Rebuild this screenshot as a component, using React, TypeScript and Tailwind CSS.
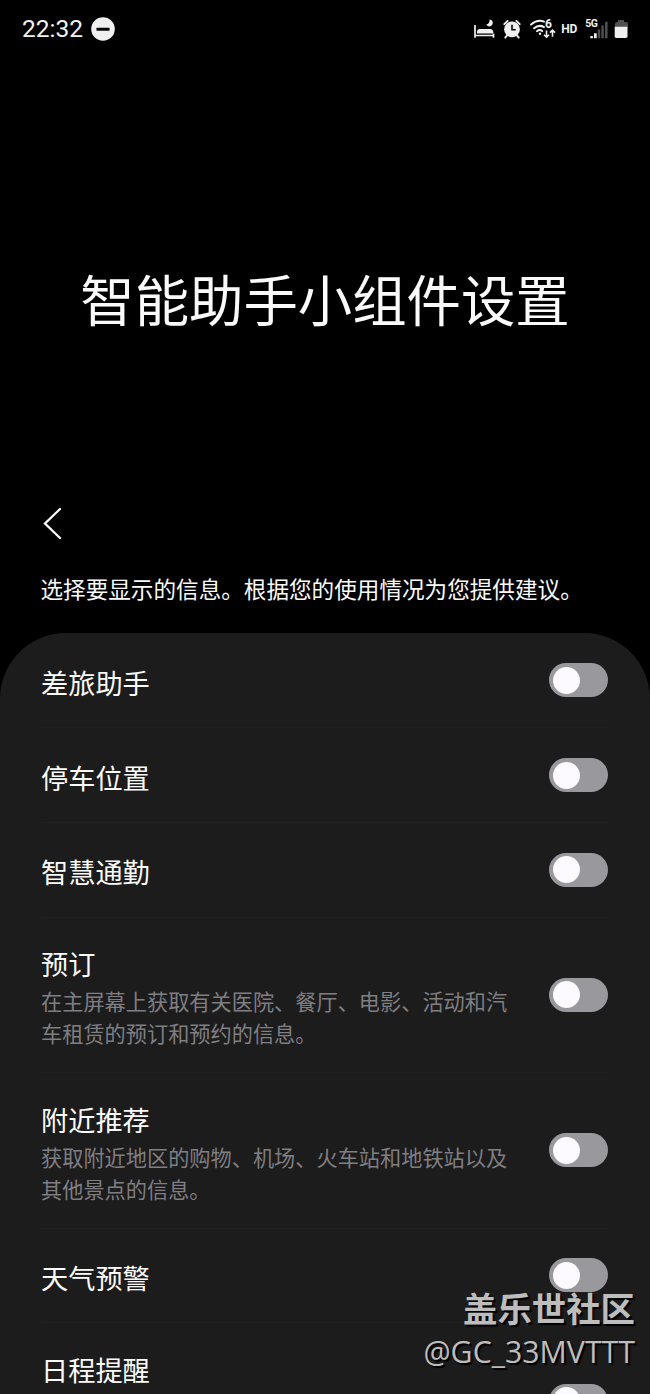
import React from "react";

const items = [
  { name: "差旅助手" },
  { name: "停车位置" },
  { name: "智慧通勤" },
  {
    name: "预订",
    lines: ["在主屏幕上获取有关医院、餐厅、电影、活动和汽", "车租赁的预订和预约的信息。"],
  },
  {
    name: "附近推荐",
    lines: ["获取附近地区的购物、机场、火车站和地铁站以及", "其他景点的信息。"],
  },
  { name: "天气预警" },
  { name: "日程提醒", lines: ["", ""] },
];

function StatusBar() {
  return (
    <div className="flex h-[58px] shrink-0 items-center justify-between pr-[21px] pl-[22px] text-[#f2f2f2]">
      <div className="flex items-center gap-[8px]">
        <span className="w-[61px] font-['Roboto'] text-[24.5px] leading-[30px] whitespace-nowrap">22:32</span>
        <svg width="24" height="24" viewBox="0 0 24 24">
          <circle cx="12" cy="12" r="11.8" fill="#f0f0f0" />
          <rect x="5.5" y="10.7" width="13" height="3" rx="0.5" fill="#050505" />
        </svg>
      </div>
      <svg width="156" height="24" viewBox="473 17 156 24" fill="none">
        {/* sleep mode */}
        <path d="M475 25v12.7M475 35.5h18.5M493.5 37.7v-4" stroke="#f0f0f0" strokeWidth="1.7" />
        <path d="M477 33.4v-1.6q.2-2.8 3-2.8h10q3.2 0 3.5 4.4z" fill="#f0f0f0" />
        <path d="M489.6 19.4a3.5 3.5 0 1 1-3.4 5.1q3.6-.7 3.4-5.1z" fill="#f0f0f0" />
        {/* alarm */}
        <circle cx="512" cy="29.3" r="7.9" fill="#f0f0f0" />
        <path d="M504.3 24.2l3.3-3.3M519.7 24.2l-3.3-3.3M507.3 35l-2 2.6M516.7 35l2 2.6" stroke="#f0f0f0" strokeWidth="1.9" strokeLinecap="round" />
        <path d="M512 24.8v5h3.7" stroke="#080808" strokeWidth="1.6" />
        {/* wifi */}
        <path d="M531 24.5q6.5-5.3 13-2.9M534 28.2q5-4 10-1.1M537 31.2q2.7-2.2 5.2-.1" stroke="#f0f0f0" strokeWidth="2" strokeLinecap="round" />
        <circle cx="540" cy="33.7" r="1.2" fill="#f0f0f0" />
        <text x="545" y="27.8" fill="#f0f0f0" fontFamily="Roboto" fontSize="12" fontWeight="700">6</text>
        <path d="M546.5 30.5v6.3M544 34.7l2.5 2.5 2.5-2.5M552.5 36.8v-6.3M550 32.6l2.5-2.5 2.5 2.5" stroke="#f0f0f0" strokeWidth="1.6" />
        <text x="561.3" y="33" fill="#f0f0f0" fontFamily="Roboto" fontSize="12" fontWeight="700" textLength="16">HD</text>
        {/* mobile signal */}
        <text x="585.3" y="27" fill="#f0f0f0" fontFamily="Roboto" fontSize="10.5" fontWeight="700" textLength="12.5">5G</text>
        <path d="M590.3 36h2.6v2.3h-2.6zM594 33.3h2.7v5H594z" fill="#f0f0f0" />
        <path d="M597.7 29.5h2.5v8.8h-2.5zM601.3 25.5h2.5v12.8h-2.5zM605 21.8h2.6v16.5H605z" fill="#4e4e4e" />
        {/* battery */}
        <path d="M618 20h6v2h2q2 0 2 2v3h-13v-3q0-2 2-2h1z" fill="#505050" />
        <path d="M614.7 26.8h12.8v9.4q0 1.8-1.8 1.8h-9.2q-1.8 0-1.8-1.8z" fill="#f0f0f0" />
      </svg>
    </div>
  );
}

function Switch() {
  return (
    <div className="flex h-[34px] w-[59px] shrink-0 items-center rounded-full bg-[#99989d] pl-[3.5px]">
      <div className="h-[27px] w-[27px] rounded-full bg-[#fcfaff]" />
    </div>
  );
}

function App() {
  return (
    <div className="relative flex h-[1394px] w-[650px] flex-col overflow-hidden bg-black font-['Noto_Sans_CJK_SC',sans-serif] text-[#fafafa]">
      <StatusBar />
      <h1 className="mt-[200px] text-center text-[54.4px] leading-[80px] whitespace-nowrap">智能助手小组件设置</h1>
      <div className="mt-[168px] h-[34px] pl-[42px]">
        <svg width="22" height="34" viewBox="0 0 22 34" fill="none">
          <path d="M18 3L3 17.5l15 14.5" stroke="#fafafa" strokeWidth="2.3" strokeLinecap="round" />
        </svg>
      </div>
      <p className="mt-[32px] h-[34px] pl-[40.5px] text-[22.6px] leading-[34px] whitespace-nowrap">
        选择要显示的信息。根据您的使用情况为您提供建议。
      </p>
      <div className="mt-[27px] h-[800px] shrink-0 rounded-t-[66px] bg-[#1c1c1c] pt-[0.4px] pr-[42px] pl-[41px]">
        {items.map((item, i) => (
          <div
            key={i}
            className={`flex items-center justify-between border-b border-[#202020] ${item.lines ? "h-[155.4px]" : "h-[94.8px]"}`}
          >
            <div className={item.lines ? "pt-[2px]" : "pt-[4px]"}>
              <h2 className="h-[41px] text-[27.2px] leading-[40px] whitespace-nowrap">{item.name}</h2>
              {item.lines?.map((line, n) => (
                <p key={n} className="h-[32px] text-[21.2px] leading-[33px] whitespace-nowrap text-[#7f7e82]">
                  {line}
                </p>
              ))}
            </div>
            <Switch />
          </div>
        ))}
      </div>

      {/* community watermark */}
      <div className="absolute right-[15px] bottom-[20px] flex flex-col items-end whitespace-nowrap text-[#bdbdbd] [text-shadow:2px_2px_1px_#000]">
        <span className="h-[45px] text-[34.4px] leading-[44px] font-bold">盖乐世社区</span>
        <span className="font-['Open_Sans'] text-[30.3px] leading-[44px]">@GC_33MVTTT</span>
      </div>
    </div>
  );
}

export default App;
